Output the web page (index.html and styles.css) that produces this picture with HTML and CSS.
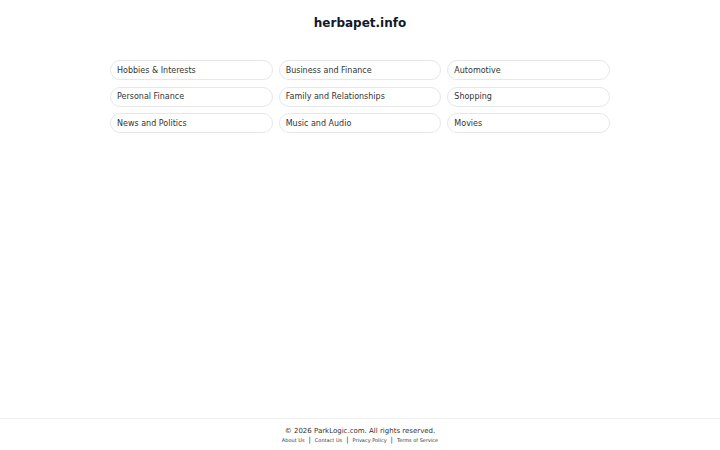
FILE: index.html
```html
<!DOCTYPE html>
<html lang="en">

<head>
     <meta charset="UTF-8">
     <meta name="viewport" content="width=device-width, initial-scale=1.0">
     <title>herbapet.info</title>
     <link rel="stylesheet" href="styles.css">
</head>

<body>
     <div class="page">
          <div class="main">
               <h1 class="domain">herbapet.info</h1>
               <div class="links">
                    <a class="pill" href="#">Hobbies &amp; Interests</a>
                    <a class="pill" href="#">Business and Finance</a>
                    <a class="pill" href="#">Automotive</a>
                    <a class="pill" href="#">Personal Finance</a>
                    <a class="pill" href="#">Family and Relationships</a>
                    <a class="pill" href="#">Shopping</a>
                    <a class="pill" href="#">News and Politics</a>
                    <a class="pill" href="#">Music and Audio</a>
                    <a class="pill" href="#">Movies</a>
               </div>
          </div>
          <div class="footer">
               <p class="copy">© 2026 ParkLogic.com. All rights reserved.</p>
               <div class="footLinks">
                    <a href="#">About Us</a>
                    <span class="sep">|</span>
                    <a href="#">Contact Us</a>
                    <span class="sep">|</span>
                    <a href="#">Privacy Policy</a>
                    <span class="sep">|</span>
                    <a href="#">Terms of Service</a>
               </div>
          </div>
     </div>
</body>

</html>
```

FILE: styles.css
```css
* {
     margin: 0px;
     padding: 0px;
     box-sizing: border-box;
     font-family: "DejaVu Sans", sans-serif;
}

body {
     background-color: #fff;
     color: #1f2937;
}

.page {
     display: flex;
     flex-direction: column;
     min-height: 100vh;
}

.main {
     flex: 1;
     display: flex;
     flex-direction: column;
     align-items: center;
}

.domain {
     font-size: 12px;
     font-weight: bold;
     color: #111827;
     margin-top: 16px;
     line-height: 15px;
}

.links {
     width: 500px;
     margin-top: 29px;
     display: grid;
     grid-template-columns: repeat(3, 1fr);
     column-gap: 6px;
     row-gap: 6.5px;
}

.pill {
     display: flex;
     align-items: center;
     height: 20px;
     padding: 0px 6px;
     border: 1px solid #e5e7eb;
     border-radius: 10px;
     font-size: 8px;
     color: #333;
     text-decoration: none;
}

.footer {
     border-top: 1px solid #f0f0f0;
     height: 32px;
     display: flex;
     flex-direction: column;
     align-items: center;
     padding-top: 8px;
}

.copy {
     font-size: 7px;
     line-height: 9px;
     color: #333;
}

.footLinks {
     display: flex;
     align-items: center;
     gap: 4px;
     a {
          font-size: 5px;
          color: #333;
          text-decoration: none;
     }
     .sep {
          font-size: 7px;
          line-height: 8px;
          color: #333;
     }
}
```
